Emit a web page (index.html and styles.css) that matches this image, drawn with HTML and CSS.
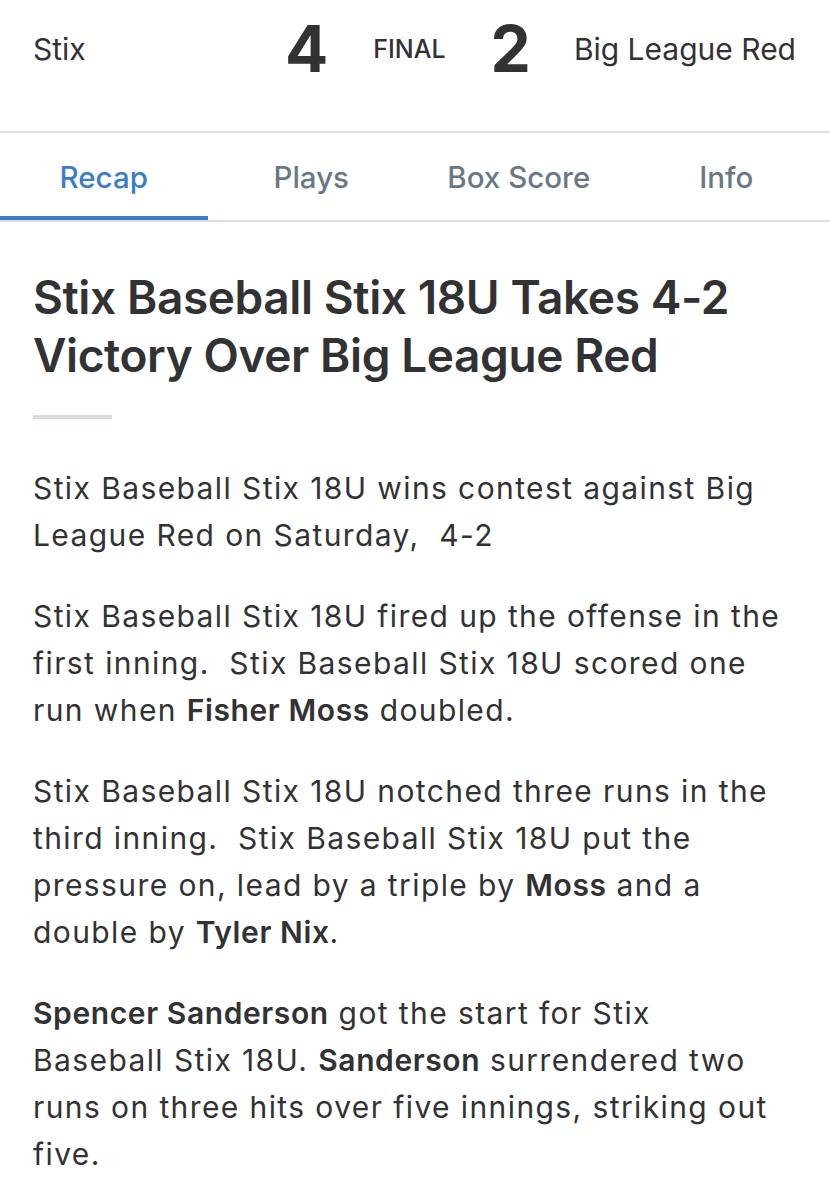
FILE: index.html
```html
<!DOCTYPE html>
<html lang="en">
<head>
    <meta charset="UTF-8">
    <meta name="viewport" content="width=device-width, initial-scale=1.0">
    <title>Game Recap</title>
    <link rel="stylesheet" href="styles.css">
</head>
<body>

    <div class="scoreboard">
        <div class="team">Stix</div>
        <div class="score-group">
            <span class="score">4</span>
            <span class="status">FINAL</span>
            <span class="score">2</span>
        </div>
        <div class="team team-away">Big League Red</div>
    </div>

    <div class="tabs">
        <div class="tab active">Recap</div>
        <div class="tab">Plays</div>
        <div class="tab">Box Score</div>
        <div class="tab">Info</div>
    </div>

    <div class="recap">
        <h1>Stix Baseball Stix 18U Takes 4-2 Victory Over Big League Red</h1>
        <div class="divider"></div>

        <p>Stix Baseball Stix 18U wins contest against Big League Red on Saturday,&nbsp; 4-2</p>

        <p>Stix Baseball Stix 18U fired up the offense in the first inning.&nbsp; Stix Baseball Stix 18U scored one run when <b>Fisher Moss</b> doubled.</p>

        <p>Stix Baseball Stix 18U notched three runs in the third inning.&nbsp; Stix Baseball Stix 18U put the pressure on, lead by a triple by <b>Moss</b> and a double by <b>Tyler Nix</b>.</p>

        <p><b>Spencer Sanderson</b> got the start for Stix Baseball Stix 18U. <b>Sanderson</b> surrendered two runs on three hits over five innings, striking out five.</p>
    </div>

</body>
</html>
```

FILE: styles.css
```css
body {
    font-family: Inter, "Noto Sans", sans-serif;
    background: white;
    color: #323235;
    margin: 0;
}

.scoreboard {
    display: flex;
    align-items: center;
    box-sizing: border-box;
    height: 133px;
    padding: 0 34px 34px 33px;
    border-bottom: 2px solid #dcdee1;
}

.team {
    flex: 1;
    font-size: 30px;
}

.team-away {
    flex: none;
    margin-left: 43px;
}

.score-group {
    display: flex;
    align-items: center;
    gap: 45px;
}

.score {
    font-size: 64px;
    font-weight: 700;
}

.status {
    font-size: 25px;
    font-weight: 500;
}

.tabs {
    display: grid;
    grid-template-columns: repeat(4, 1fr);
    border-bottom: 2px solid #dcdee1;
}

.tab {
    text-align: center;
    font-size: 29.5px;
    line-height: 36px;
    font-weight: 500;
    color: #6a7886;
    padding: 26px 0 21px;
    border-bottom: 4px solid transparent;
}

.tab.active {
    color: #3a7dcb;
    border-bottom-color: #3a7dcb;
}

.recap {
    padding: 0 40px 0 33px;
}

h1 {
    font-size: 46px;
    font-weight: 600;
    line-height: 58px;
    letter-spacing: -0.4px;
    margin: 46px 0 0;
}

.divider {
    width: 79px;
    height: 4px;
    background-color: #d6dce2;
    margin: 31px 0 46px;
}

p {
    font-size: 30px;
    line-height: 47px;
    letter-spacing: 1.4px;
    margin: 0 0 34px;
}

b {
    font-weight: 600;
    letter-spacing: 0.6px;
}
```
